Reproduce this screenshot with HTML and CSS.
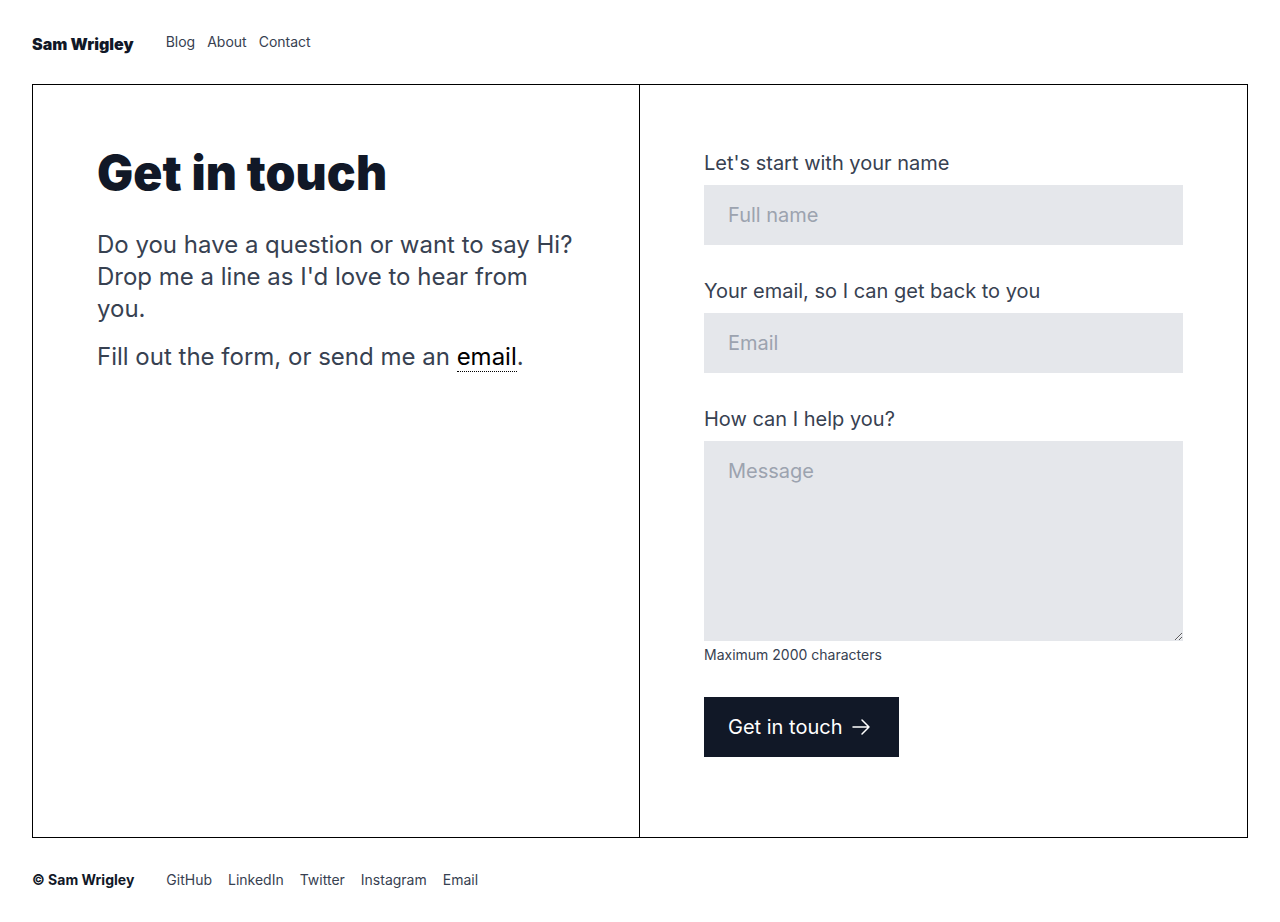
FILE: index.html
```html
<!DOCTYPE html>
<html lang="en">
<head>
<meta charset="utf-8">
<title>Contact — Sam Wrigley</title>
<link rel="stylesheet" href="styles.css">
</head>
<body>
<div class="page">
  <header class="site-header">
    <a class="brand" href="#">Sam Wrigley</a>
    <nav class="nav">
      <a href="#">Blog</a>
      <a href="#">About</a>
      <a href="#">Contact</a>
    </nav>
  </header>
  <main class="contact">
    <section class="intro">
      <h1>Get in touch</h1>
      <p>Do you have a question or want to say Hi? Drop me a line as I'd love to hear from you.</p>
      <p>Fill out the form, or send me an <a class="email-link" href="#">email</a>.</p>
    </section>
    <section class="form-col">
      <form class="form">
        <label class="field">
          <span class="label">Let's start with your name</span>
          <input type="text" placeholder="Full name">
        </label>
        <label class="field">
          <span class="label">Your email, so I can get back to you</span>
          <input type="email" placeholder="Email">
        </label>
        <label class="field">
          <span class="label">How can I help you?</span>
          <textarea placeholder="Message"></textarea>
          <span class="hint">Maximum 2000 characters</span>
        </label>
        <button type="button" class="submit">Get in touch
          <svg width="20" height="20" viewBox="0 0 20 20" fill="none" stroke="currentColor" stroke-width="1.5" stroke-linecap="round" stroke-linejoin="round"><path d="M2 10h16M11 3l7 7-7 7"/></svg>
        </button>
      </form>
    </section>
  </main>
  <footer class="site-footer">
    <span class="copy">© Sam Wrigley</span>
    <nav class="nav nav-footer">
      <a href="#">GitHub</a>
      <a href="#">LinkedIn</a>
      <a href="#">Twitter</a>
      <a href="#">Instagram</a>
      <a href="#">Email</a>
    </nav>
  </footer>
</div>
</body>
</html>
```
FILE: styles.css
```css
* { box-sizing: border-box; }
html, body { margin: 0; padding: 0; }
body {
  font-family: Inter, "Noto Sans", sans-serif;
  color: #374151;
  background: #fff;
}
a { text-decoration: none; color: inherit; }

.page {
  min-height: 100vh;
  display: flex;
  flex-direction: column;
  padding: 0 32px;
}

.site-header {
  display: flex;
  align-items: flex-start;
  gap: 32px;
  padding: 32px 0 28px;
}
.brand {
  font-size: 16px;
  line-height: 24px;
  font-weight: 900;
  color: #111827;
}
.nav {
  display: flex;
  gap: 12px;
  font-size: 14px;
  line-height: 20px;
  color: #374151;
}

.contact {
  flex: 1;
  display: grid;
  grid-template-columns: 1fr 1fr;
  border: 1px solid #000;
}
.intro {
  padding: 64px;
  border-right: 1px solid #000;
}
.intro h1 {
  margin: 0 0 32px;
  font-size: 48px;
  line-height: 48px;
  font-weight: 900;
  color: #111827;
  letter-spacing: 0.1px;
}
.intro p {
  margin: 0 0 16px;
  font-size: 24px;
  line-height: 32px;
  color: #374151;
}
.email-link {
  color: #000;
  border-bottom: 1px dotted #000;
}

.form-col {
  padding: 64px;
}
.form {
  display: flex;
  flex-direction: column;
  gap: 32px;
}
.field {
  display: flex;
  flex-direction: column;
}
.label {
  font-size: 20px;
  line-height: 28px;
  color: #374151;
  margin-bottom: 8px;
}
.field input,
.field textarea {
  font-family: inherit;
  font-size: 20px;
  line-height: 28px;
  color: #111827;
  background: #e5e7eb;
  border: 0;
  border-radius: 0;
  padding: 16px 24px;
  outline: none;
  width: 100%;
  margin: 0;
}
.field textarea {
  height: 200px;
  resize: vertical;
  display: block;
}
.field input::placeholder,
.field textarea::placeholder {
  color: #9ca3af;
}
.hint {
  margin-top: 4px;
  font-size: 14px;
  line-height: 20px;
  color: #374151;
}
.submit {
  align-self: flex-start;
  display: flex;
  align-items: center;
  gap: 9px;
  height: 60px;
  padding: 0 28px 0 24px;
  border: 0;
  border-radius: 0;
  background: #111827;
  color: #fff;
  font-family: inherit;
  font-size: 20px;
  line-height: 28px;
  cursor: pointer;
}

.site-footer {
  display: flex;
  align-items: flex-start;
  gap: 32px;
  padding: 32px 0;
  line-height: 20px;
}
.copy {
  font-size: 14px;
  font-weight: 700;
  color: #111827;
}
.nav-footer {
  gap: 16px;
}
```
